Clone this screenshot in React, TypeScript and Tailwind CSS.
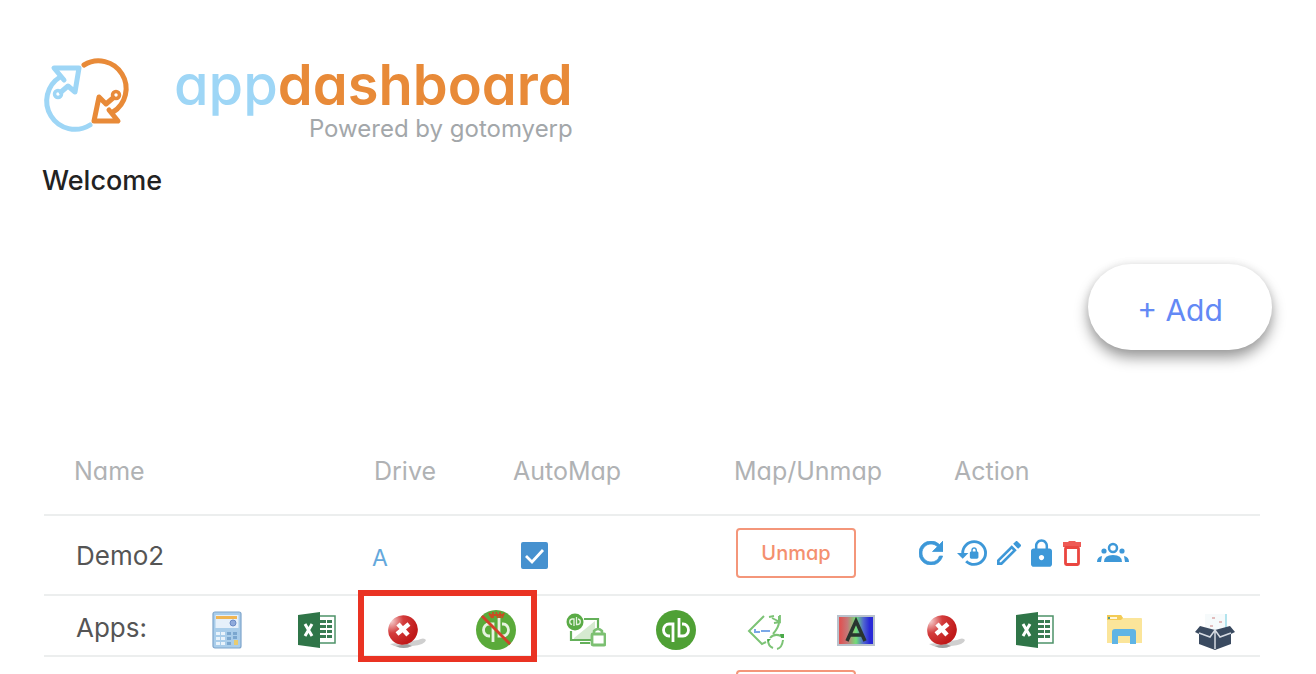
import type { ReactNode } from 'react'
import { MdLock, MdLockReset, MdOutlineEdit, MdRefresh } from 'react-icons/md'

function Logo() {
  return (
    <svg className="h-[84px] w-[100px] shrink-0" viewBox="38 53 100 84" fill="none" strokeWidth="5" strokeLinecap="round" strokeLinejoin="round">
      <g stroke="#9ed6f6">
        <path d="M60 77A28 28 0 1 0 90 125" />
        <path d="M64 80L54 68H79L75 92L68 86L61 92" />
        <circle cx="58" cy="94" r="3.5" strokeWidth="3.5" />
      </g>
      <g stroke="#e88a38">
        <path d="M84 65A27.500 27.500 0 1 1 113 112" />
        <path d="M109 110L118 121H94L99 97L106 104L113 98" />
        <circle cx="116" cy="95" r="3.5" strokeWidth="3.5" />
      </g>
    </svg>
  )
}

function CalculatorIcon() {
  return (
    <svg className="size-10" viewBox="0 0 40 40">
      <rect x="6" y="2" width="28" height="36" rx="2" fill="#a9cdea" stroke="#7fa5cb" strokeWidth="1.2" />
      <rect x="8.500" y="5" width="23" height="13" fill="#e6f0fa" />
      <rect x="9" y="6" width="21" height="3" fill="#f0b552" />
      <circle cx="26" cy="13" r="3" fill="#8faadb" stroke="#6a8ac6" />
      <path d="M9 22h4v3H9zM14 22h4v3h-4zM9 27h4v3H9zM14 27h4v3h-4zM9 32h4v3H9zM14 32h4v3h-4z" fill="#e9f3fb" />
      <path d="M20 22h4v3h-4zM26 22h4v3h-4zM20 27h4v3h-4zM20 32h4v3h-4zM26 26h4v3h-4z" fill="#7ba7cf" />
      <path d="M27 30h4v5h-4z" fill="#e8cb70" />
    </svg>
  )
}

function ExcelIcon() {
  return (
    <svg className="size-10" viewBox="0 0 40 40">
      <rect x="20" y="6" width="18" height="27" fill="#fff" stroke="#4d9268" strokeWidth="1.500" />
      <path d="M23 10h6v3h-6zM30 10h5v3h-5zM23 15h6v3h-6zM30 15h5v3h-5zM23 20h6v3h-6zM30 20h5v3h-5zM23 25h6v3h-6zM30 25h5v3h-5z" fill="#3a7d54" />
      <path d="M1 5L23 2V38L1 35Z" fill="#2f7548" />
      <path d="M8 14L15 26M15 14L8 26" stroke="#fff" strokeWidth="3" />
    </svg>
  )
}

function ErrorIcon() {
  return (
    <svg className="size-10" viewBox="0 0 40 40">
      <defs>
        <radialGradient id="ball" cx="0.35" cy="0.02" r="0.9">
          <stop offset="0" stopColor="#f5d0d0" />
          <stop offset="0.45" stopColor="#d43c3c" />
          <stop offset="1" stopColor="#c01a1a" />
        </radialGradient>
      </defs>
      <path d="M3 34Q16 41 25 36Q38 35 39 30Q37 27 31 30Z" fill="#cfcfcf" />
      <path d="M9 36Q16 40 25 36L20 34Z" fill="#a0a0a0" />
      <ellipse cx="16" cy="20" rx="15" ry="14.500" fill="url(#ball)" transform="rotate(-35 16 20)" />
      <path d="M11 14L21 25M22 14L10 24" stroke="#fff" strokeWidth="4.500" />
    </svg>
  )
}

function QbMark() {
  return (
    <g fill="none" strokeWidth="2.8">
      <path d="M17 32V14H13A5.500 6 0 0 0 13 26H14" />
      <path d="M23 8V26H27A5.500 6 0 0 0 27 14H26" />
    </g>
  )
}

function QuickBooksIcon() {
  return (
    <svg className="size-10" viewBox="0 0 40 40">
      <circle cx="20" cy="20" r="20" fill="#4fa035" />
      <g stroke="#fff">
        <QbMark />
      </g>
    </svg>
  )
}

function QuickBooksBlockedIcon() {
  return (
    <svg className="size-10" viewBox="0 0 40 40">
      <circle cx="20" cy="20" r="20" fill="#5aaa3a" />
      <g stroke="#e6f3df">
        <QbMark />
      </g>
      <path d="M13 3L16 8M17 2V8M20 2L22 8M24 2V8M28 3L26 8M13 5H28" stroke="#c84e22" strokeWidth="1.800" />
      <path d="M6 6L34 34" stroke="#d2412a" strokeWidth="3" />
    </svg>
  )
}

function RemoteScreenIcon() {
  return (
    <svg className="size-10" viewBox="0 0 40 40" fill="none">
      <path d="M8 28L29 11V23L26 30H8Z" fill="#d5ead0" />
      <path d="M18 9H32V18M5 21V30H25M14 33H24" stroke="#64b05a" strokeWidth="2.200" />
      <circle cx="9" cy="12" r="8.500" fill="#5aab46" />
      <path d="M8 16V9H6A2.800 2.800 0 0 0 6 14.500M10.500 7V14.500H12A2.800 2.800 0 0 0 12 9" stroke="#e4f2df" strokeWidth="1.300" />
      <path d="M28 25V21Q32 17 36 21V25" stroke="#7cc072" strokeWidth="2.500" />
      <rect x="26" y="24" width="13" height="11" rx="1" fill="#fff" stroke="#7cc072" strokeWidth="2.800" />
    </svg>
  )
}

function SyncIcon() {
  return (
    <svg className="size-10" viewBox="0 0 40 40" fill="none">
      <path d="M18 6L3 21L16 34L20 32M23 7L28 6M33 6V12Q33 17 27 24" stroke="#7cc375" strokeWidth="2" />
      <path d="M26 8L34 12L34 5M34 12L28 13" stroke="#7cc375" strokeWidth="1.800" />
      <path d="M9 19V22H14M15 21H24" stroke="#7ba8e8" strokeWidth="2" />
      <path d="M24 28Q28 23 35 26M37 30Q36 38 31 39M27 38Q22 36 22 30" stroke="#7cc375" strokeWidth="2" />
      <path d="M34 24H38V28H35ZM21 29H25L22 32Z" fill="#4aa94a" />
    </svg>
  )
}

function FontColorIcon() {
  return (
    <svg className="size-10" viewBox="0 0 40 40">
      <defs>
        <linearGradient id="rgb">
          <stop offset="0.05" stopColor="#dd5555" />
          <stop offset="0.25" stopColor="#c57979" />
          <stop offset="0.5" stopColor="#70df77" />
          <stop offset="0.72" stopColor="#5066cf" />
          <stop offset="0.9" stopColor="#2929d8" />
        </linearGradient>
      </defs>
      <rect x="1" y="5" width="38" height="31" fill="#b9c2cc" />
      <rect x="3" y="7" width="34" height="27" fill="url(#rgb)" />
      <path d="M11 31L20 11L29 31M14 25H26" fill="none" stroke="#29352f" strokeWidth="3.500" />
    </svg>
  )
}

function FolderIcon() {
  return (
    <svg className="size-10" viewBox="0 0 40 40">
      <path d="M2 6Q2 5 3 5H16L18 8H36Q37 8 37 9V33H2Z" fill="#fbe59a" />
      <path d="M2 5H16L18 8L16 10H2Z" fill="#f3cb55" />
      <path d="M5 7H12V9H5Z" fill="#fff6d8" />
      <path d="M3 7H5V9H3Z" fill="#5d9b86" />
      <path d="M7 34V22Q7 19 10 19H28Q31 19 31 22V34H25V26H13V34Z" fill="#5fb4e5" />
    </svg>
  )
}

function BoxIcon() {
  return (
    <svg className="size-10" viewBox="0 0 40 40">
      <path d="M10 4H31V20H10Z" fill="#f6fafb" />
      <path d="M31 4V18" stroke="#9adbe8" strokeWidth="1.500" />
      <path d="M17 8H20M24 12H27M15 16H18" stroke="#dba9a9" strokeWidth="1.500" />
      <path d="M5 16L20 20L35 16L40 22L36 24V34L20 40L4 34V24L0 22Z" fill="#3a4a60" />
      <path d="M4 23L15 27L20 20L25 27L36 23M20 20V39" fill="none" stroke="#d5dae1" strokeWidth="1.500" />
    </svg>
  )
}

function TrashIcon() {
  return (
    <svg className="h-[26px] w-5" viewBox="0 0 20 26">
      <path d="M1 2H6L7 1H13L14 2H19V7H1Z" fill="#ee5a55" />
      <rect x="3.500" y="7.500" width="13" height="17" rx="1" fill="none" stroke="#ea4640" strokeWidth="2.800" />
    </svg>
  )
}

function PeopleIcon() {
  return (
    <svg className="h-[22px] w-[34px]" viewBox="0 0 34 22" fill="currentColor">
      <circle cx="17" cy="6" r="4" fill="none" stroke="currentColor" strokeWidth="2.500" />
      <circle cx="8" cy="9" r="2.600" />
      <circle cx="26" cy="9" r="2.600" />
      <path d="M8 20Q8 13 17 13Q26 13 26 20Z" />
      <path d="M1 20Q1 15 6 14L5 20ZM33 20Q33 15 28 14L29 20Z" />
    </svg>
  )
}

function AppButton({ label, children }: { label: string; children: ReactNode }) {
  return (
    <button type="button" aria-label={label} className="flex justify-center">
      {children}
    </button>
  )
}

function UnmapButton() {
  return (
    <button type="button" className="block h-[50px] w-[120px] rounded-sm border-2 border-[#f4967a] text-xl font-medium text-[#f4906f]">
      Unmap
    </button>
  )
}

function RowActions() {
  return (
    <div className="flex items-center gap-2.5 text-[#3d98d8]">
      <button type="button" aria-label="Refresh" className="mr-1">
        <MdRefresh className="size-6 stroke-[0.5]" viewBox="4 4 16 16" />
      </button>
      <button type="button" aria-label="Reset lock">
        <MdLockReset className="h-[26px] w-[30px]" viewBox="1 3 21 18" />
      </button>
      <button type="button" aria-label="Edit">
        <MdOutlineEdit className="size-6" viewBox="3 3 18 18" />
      </button>
      <button type="button" aria-label="Lock">
        <MdLock className="h-[30px] w-[21px]" viewBox="4 1 16 21" />
      </button>
      <button type="button" aria-label="Delete" className="mr-1">
        <TrashIcon />
      </button>
      <button type="button" aria-label="Users">
        <PeopleIcon />
      </button>
    </div>
  )
}

export default function App() {
  return (
    <div className="h-screen overflow-hidden bg-white pl-11 pr-14 pt-[53px] font-['Inter',sans-serif] text-[#555] [font-feature-settings:'cv11']">
      <header>
        <div className="-ml-1.5 flex gap-9">
          <Logo />
          <div className="w-fit text-right">
            <div className="text-[56px] leading-[64px] font-medium text-[#9ed6f6]">
              app<span className="font-semibold text-[#e88a38]">dashboard</span>
            </div>
            <div className="text-2xl leading-6 text-[#a3a7aa]">Powered by gotomyerp</div>
          </div>
        </div>
        <h1 className="-ml-0.5 mt-6 text-[27px] leading-8 font-medium text-[#222]">Welcome</h1>
      </header>

      <div className="-mr-3 mt-[67px] flex justify-end">
        <button
          type="button"
          className="h-[86px] w-[184px] rounded-full bg-white pt-1.5 text-[30px] text-[#6389f5] shadow-[0_8px_14px_rgba(0,0,0,0.38),0_0_8px_rgba(0,0,0,0.08)]"
        >
          + Add
        </button>
      </div>

      <table className="mt-[75px] w-full table-fixed text-left text-[26px]">
        <colgroup>
          <col className="w-[300px]" />
          <col className="w-[139px]" />
          <col className="w-[221px]" />
          <col className="w-[215px]" />
          <col />
        </colgroup>
        <thead>
          <tr className="h-[90px] border-b-2 border-[#eceeee] text-[25px] text-[#b0b2b4]">
            <th className="pl-[30px] pt-1 font-normal">Name</th>
            <th className="pl-[30px] pt-1 font-normal">Drive</th>
            <th className="pl-[30px] pt-1 font-normal">AutoMap</th>
            <th className="pl-[30px] pt-1 font-normal">Map/Unmap</th>
            <th className="pl-[35px] pt-1 font-normal">Action</th>
          </tr>
        </thead>
        <tbody>
          <tr className="h-20 border-b-2 border-[#eceeee]">
            <td className="pl-8">Demo2</td>
            <td className="pl-7 pt-1.5 text-[23px]">
              <a href="#drive" className="text-[#64a8dc]">A</a>
            </td>
            <td className="pl-[38px]">
              <label className="relative block size-[27px]">
                <input
                  type="checkbox"
                  defaultChecked
                  aria-label="AutoMap Demo2"
                  className="peer block size-full appearance-none rounded-xs border-2 border-[#4691cf] checked:bg-[#4691cf]"
                />
                <svg className="pointer-events-none absolute inset-0 hidden peer-checked:block" viewBox="0 0 27 27" fill="none">
                  <path d="M5 14L11 20L22 8" stroke="#fff" strokeWidth="2.8" />
                </svg>
              </label>
            </td>
            <td className="pb-1 pl-8">
              <UnmapButton />
            </td>
            <td className="pb-1">
              <RowActions />
            </td>
          </tr>
          <tr className="h-[61px] border-b-2 border-[#eceeee]">
            <td colSpan={5} className="pl-8">
              <div className="flex items-center">
                <span className="w-[106px] shrink-0 pt-1">Apps:</span>
                <div className="mt-2 grid flex-1 grid-cols-12">
                  <AppButton label="Calculator"><CalculatorIcon /></AppButton>
                  <AppButton label="Excel"><ExcelIcon /></AppButton>
                  <div className="relative col-span-2 grid grid-cols-2">
                    <AppButton label="Stopped app"><ErrorIcon /></AppButton>
                    <AppButton label="QuickBooks disabled"><QuickBooksBlockedIcon /></AppButton>
                    <div className="pointer-events-none absolute -bottom-3 -top-5 -left-1 right-1 border-6 border-[#ea3323]" />
                  </div>
                  <AppButton label="QuickBooks remote"><RemoteScreenIcon /></AppButton>
                  <AppButton label="QuickBooks"><QuickBooksIcon /></AppButton>
                  <AppButton label="Sync"><SyncIcon /></AppButton>
                  <AppButton label="Fonts"><FontColorIcon /></AppButton>
                  <AppButton label="Stopped app"><ErrorIcon /></AppButton>
                  <AppButton label="Excel"><ExcelIcon /></AppButton>
                  <AppButton label="Files"><FolderIcon /></AppButton>
                  <AppButton label="Package"><BoxIcon /></AppButton>
                </div>
              </div>
            </td>
          </tr>
          <tr className="h-20">
            <td colSpan={3} />
            <td className="pb-1 pl-8">
              <UnmapButton />
            </td>
            <td />
          </tr>
        </tbody>
      </table>
    </div>
  )
}
